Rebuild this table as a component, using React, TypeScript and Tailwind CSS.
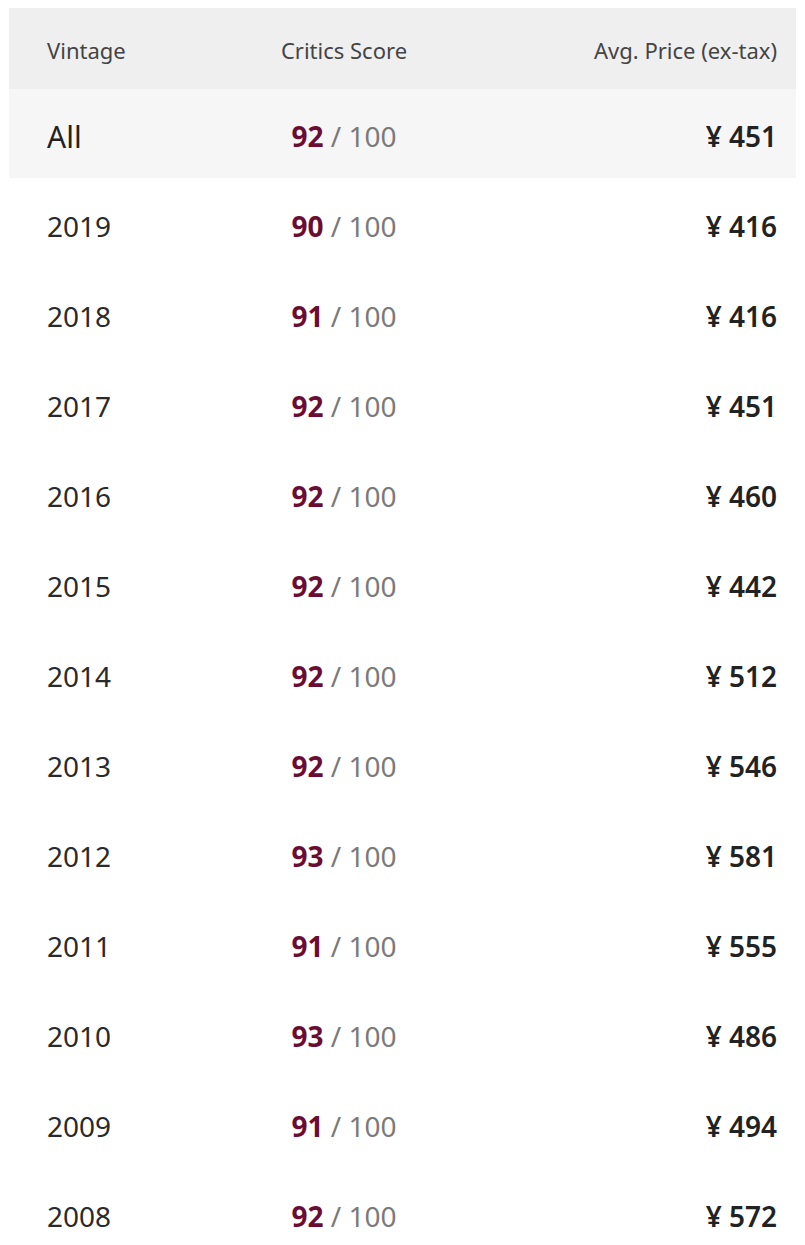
import React from "react";

const rows: { year: string; score: number; price: number }[] = [
  { year: "2019", score: 90, price: 416 },
  { year: "2018", score: 91, price: 416 },
  { year: "2017", score: 92, price: 451 },
  { year: "2016", score: 92, price: 460 },
  { year: "2015", score: 92, price: 442 },
  { year: "2014", score: 92, price: 512 },
  { year: "2013", score: 92, price: 546 },
  { year: "2012", score: 93, price: 581 },
  { year: "2011", score: 91, price: 555 },
  { year: "2010", score: 93, price: 486 },
  { year: "2009", score: 91, price: 494 },
  { year: "2008", score: 92, price: 572 },
];

function Score({ value }: { value: number }) {
  return (
    <span className="whitespace-nowrap">
      <span className="font-bold text-[#6b0d33]">{value}</span>
      <span className="text-[#7a7a7a]"> / 100</span>
    </span>
  );
}

function Row({
  label,
  score,
  price,
  highlight,
}: {
  label: string;
  score: number;
  price: number;
  highlight?: boolean;
}) {
  return (
    <div
      className={`grid grid-cols-[212px_170px_1fr] items-center pl-[38px] pr-[19px] pt-[5px] ${
        highlight ? "h-[89px] bg-[#f6f6f7]" : "h-[90px] bg-white"
      }`}
    >
      <span className={highlight ? "text-[30px] text-[#222]" : "text-[28px] text-[#2a2a2a]"}>
        {label}
      </span>
      <span className="text-center text-[28px]">
        <Score value={score} />
      </span>
      <span className="text-right text-[28px] font-semibold text-[#222]">¥ {price}</span>
    </div>
  );
}

export default function App() {
  return (
    <div
      className="min-h-screen bg-white px-[9px] pt-[8px]"
      style={{ fontFamily: '"Noto Sans", "Open Sans", sans-serif' }}
    >
      <div className="grid h-[81px] grid-cols-[212px_170px_1fr] items-center bg-[#efefef] pl-[38px] pr-[19px] pt-[3px] text-[22px] text-[#444]">
        <span>Vintage</span>
        <span className="text-center whitespace-nowrap">Critics Score</span>
        <span className="text-right">Avg. Price (ex-tax)</span>
      </div>
      <Row label="All" score={92} price={451} highlight />
      {rows.map((r) => (
        <Row key={r.year} label={r.year} score={r.score} price={r.price} />
      ))}
    </div>
  );
}
